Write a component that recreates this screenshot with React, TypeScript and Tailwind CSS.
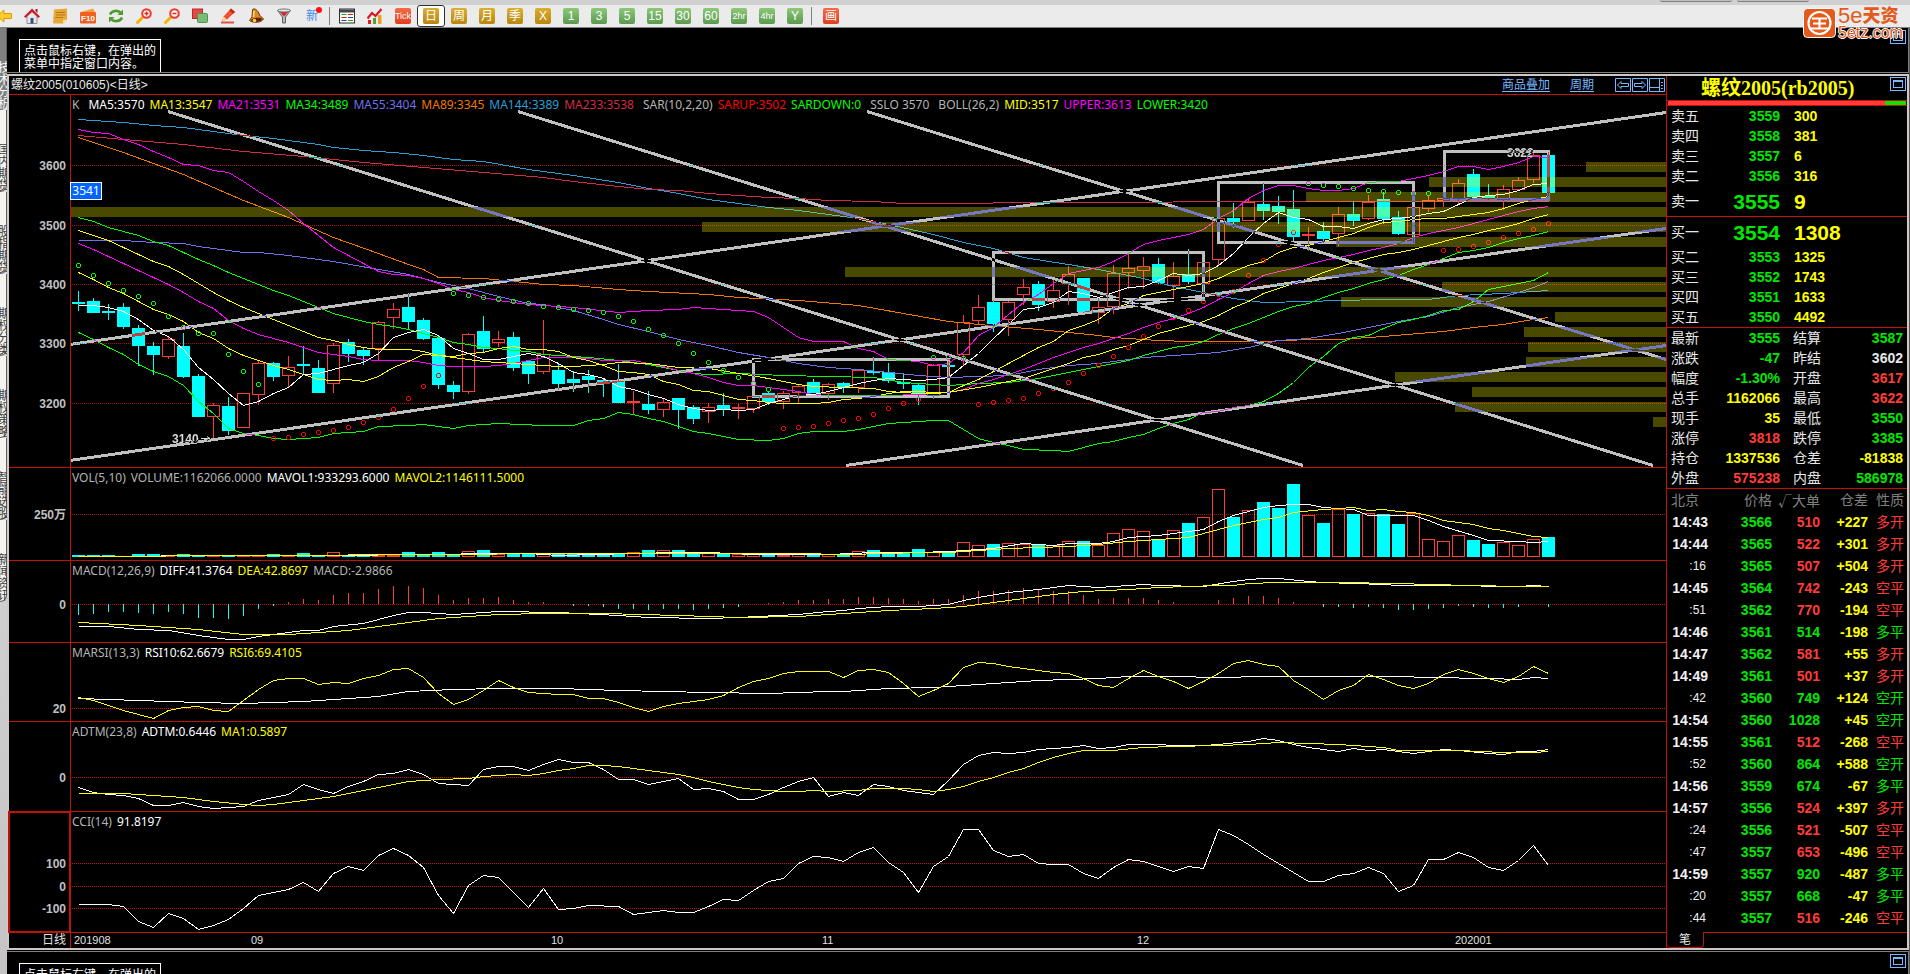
import type { ReactNode } from "react";
import clsx from "clsx";

const UP = "#ff3c38";
const DOWN = "#00ffff";
const RED = "#c01208";
const BARS = 99;

// body top, body bottom, high, low and direction of each day
const CANDLES =
  "606,612,573,633,d 602,639,594,639,d 633,639,612,660,d 621,681,609,687,d 684,738,675,797,d 738,765,726,825,d 718,772,709,776,u 738,830,699,834,d 828,951,822,951,d 915,952,909,1014,u " +
  "918,993,891,1004,d 880,983,880,983,u 790,886,782,914,u 790,830,786,843,d 802,829,768,864,u 792,797,738,822,d 804,879,780,879,d 736,853,728,879,u 726,762,717,786,d 750,768,744,795,d " +
  "667,747,663,783,u 628,655,610,687,u 621,666,580,687,d 660,717,654,720,d 714,855,708,867,d 855,876,843,897,d 703,877,699,882,u 693,747,648,758,d 718,730,693,741,u 711,804,696,813,d " +
  "783,822,779,852,d 763,817,660,822,u 810,852,789,870,d 837,849,814,876,d 828,840,810,879,d 840,853,834,891,d 843,909,792,909,d 903,907,873,945,u 912,930,873,942,d 905,929,898,951,u " +
  "894,930,894,987,d 921,957,915,972,d 922,937,909,969,u 915,928,879,948,d 922,927,912,957,u 889,926,889,939,u 879,906,873,915,d 880,907,873,927,u 859,878,853,910,u 846,880,837,880,d " +
  "853,882,849,899,u 849,862,845,880,d 811,865,811,880,u 813,819,771,825,d 817,843,789,849,d 846,851,822,868,d 855,882,850,915,d 796,889,792,896,u 795,801,783,832,d 667,766,645,797,u " +
  "622,664,585,672,u 606,672,600,696,d 607,659,603,708,u 562,584,537,615,u 552,615,543,633,d 571,607,540,624,u 523,553,498,615,u 534,636,534,640,d 622,638,595,672,u 520,622,495,641,u " +
  "505,518,460,566,u 499,513,471,567,u 491,549,474,552,d 528,558,486,594,u 522,546,447,552,d 487,553,487,590,u 355,479,352,498,u 354,366,309,384,d 306,364,295,364,u 312,333,249,360,d " +
  "318,336,288,372,d 327,411,270,422,d 402,407,381,453,u 393,417,366,430,d 343,401,321,438,u 342,363,306,378,d 306,356,286,361,u 297,357,276,372,d 351,402,333,405,d 322,406,322,430,u " +
  "301,326,288,337,u 295,302,290,321,u 250,297,237,315,u 222,291,207,291,d 288,298,252,300,d 268,300,255,330,u 241,271,231,273,u 166,241,160,248,u 165,279,156,288,d";

const candles = CANDLES.split(" ").map((c) => {
  const [top, bottom, high, low, dir] = c.split(",");
  return { top: +top, bottom: +bottom, high: +high, low: +low, up: dir === "u" };
});

const MAIN_LINES = [
  { color: "#2a9fd6", d: "0,58 3,66 5,74 7,82 9,93 11,104 13,114 16,133 17,142 19,151 21,157 23,166 25,177 27,184 30,206 31,212 33,225 36,245 38,264 40,280 42,296 44,309 46,322 48,331 50,342 52,354 54,372 57,402 59,425 61,445 63,470 66,492 68,508 69,517 71,535 73,558 75,575 77,595 79,607 82,602 84,601 87,597 90,597 92,585 95,578 98,571" },
  { color: "#d42a4a", d: "0,106 3,116 7,133 11,154 15,168 19,186 23,200 27,215 31,232 33,243 36,257 38,266 40,270 42,280 44,286 46,290 48,295 50,300 53,304 55,310 60,310 62,306 68,306 78,304 98,303" },
  { color: "#f07800", d: "0,112 1,125 3,156 5,190 7,222 9,260 11,300 14,350 17,412 20,460 22,492 23,508 24,532 27,535 31,551 33,555 36,566 38,572 42,582 44,592 48,600 52,615 55,640 58,664 60,673 64,686 68,706 69,712 72,719 74,724 79,724 82,718 84,716 87,708 91,693 93,682 95,672 97,657 98,650" },
  { color: "#7070e8", d: "0,421 3,421 5,427 7,430 8,439 10,450 11,457 12,457 14,466 17,484 20,508 22,523 24,545 26,565 28,588 30,608 31,612 33,630 35,657 36,672 38,692 40,717 42,735 44,755 46,772 48,788 50,802 52,808 54,816 56,825 58,832 60,829 62,826 64,808 66,795 68,790 71,772 74,762 76,756 78,741 80,720 82,714 84,698 86,680 88,664 90,649 92,622 94,603 96,576 97,561 98,543" },
  { color: "#00ff00", d: "0,352 1,363 2,380 3,392 4,406 5,422 6,436 7,455 8,476 9,495 10,515 11,535 12,553 13,571 14,586 15,603 16,622 17,638 18,650 19,664 20,672 21,679 22,688 23,698 24,712 25,727 26,731 27,740 28,745 29,750 30,754 31,761 32,765 34,771 36,780 38,793 40,810 41,820 42,822 44,820 47,824 50,829 53,832 55,845 56,850 58,855 60,850 62,845 64,835 66,815 68,799 69,790 70,780 71,766 72,753 73,742 74,735 75,722 76,703 77,685 78,670 79,650 80,634 81,619 82,610 83,592 84,577 85,563 86,549 87,536 88,524 89,508 90,492 91,475 92,457 93,450 94,440 95,425 96,415 97,405 98,394" },
  { color: "#ff00ff", d: "0,430 1,448 2,467 3,489 4,511 5,532 6,552 7,576 8,602 9,625 10,660 11,683 12,701 13,715 14,727 15,740 16,757 17,763 18,768 19,776 20,779 21,780 22,781 23,785 24,794 25,799 26,797 27,799 28,795 29,789 30,781 31,772 32,770 33,770 34,774 35,779 36,780 37,781 38,788 39,798 40,810 41,820 42,832 43,845 44,856 45,856 46,862 47,868 48,872 49,881 50,884 52,886 54,885 56,882 57,880 58,877 59,868 60,850 61,838 62,822 63,806 64,790 65,770 66,755 67,740 68,729 69,714 70,698 71,680 72,665 73,654 74,638 75,622 76,598 77,575 78,550 79,526 80,512 81,504 82,493 83,481 84,470 85,462 86,450 87,440 88,430 89,410 90,400 91,390 92,381 93,370 94,357 95,344 96,333 97,323 98,319" },
  { color: "#ffff00", d: "0,390 1,405 2,421 3,440 4,461 5,482 6,499 7,523 8,550 9,575 10,601 11,622 12,640 13,658 14,674 15,692 16,710 17,720 18,733 19,741 20,748 21,748 22,748 23,754 24,765 25,772 26,777 27,782 28,785 29,790 30,792 31,795 32,798 33,799 34,795 35,792 36,787 38,790 40,800 42,805 44,820 46,835 48,852 49,858 51,860 53,864 54,872 56,878 57,878 58,876 60,860 61,852 63,835 64,820 66,790 67,772 68,762 69,748 70,735 71,716 72,700 73,688 74,676 75,662 76,645 77,622 78,602 79,580 80,565 81,550 82,533 83,516 84,500 85,485 86,473 87,463 88,455 89,446 90,434 91,424 92,410 93,401 94,390 95,380 96,368 97,355 98,343" },
  { color: "#ffff00", d: "0,517 1,538 2,560 3,580 4,604 5,626 6,642 7,664 8,695 9,714 10,745 11,765 12,780 13,796 14,808 15,822 16,837 17,839 18,836 19,842 20,828 21,802 22,783 23,763 24,764 25,768 26,758 27,755 28,745 29,738 30,746 31,748 32,754 33,770 34,781 35,796 36,813 37,815 38,823 39,842 40,852 41,869 42,874 43,886 44,898 45,901 46,905 47,910 48,910 49,908 50,905 51,898 52,893 53,888 54,878 55,873 56,874 57,877 58,875 59,855 60,836 61,812 62,788 63,764 64,740 65,722 66,691 67,676 68,658 69,625 70,610 71,586 72,575 73,568 74,558 75,550 76,533 77,514 78,496 79,482 80,457 81,440 82,434 83,424 84,410 85,400 86,380 87,366 88,362 89,356 90,353 91,353 92,348 93,343 94,335 95,325 96,310 97,297 98,289" },
  { color: "#ffffff", d: "0,616 1,614 2,622 3,634 4,658 5,690 6,708 7,748 8,800 9,836 10,880 11,914 12,904 13,880 14,860 15,822 16,820 17,808 18,794 19,786 20,760 21,712 22,697 23,688 24,706 25,745 26,758 27,778 28,778 29,769 30,758 31,767 32,788 33,816 34,822 35,833 36,858 37,868 38,882 39,895 40,913 41,924 42,930 43,928 44,931 45,926 46,910 47,896 48,885 49,882 50,872 51,862 52,850 53,840 54,835 55,838 56,840 57,838 58,832 59,795 60,758 61,715 62,672 63,626 64,620 65,606 66,574 67,579 68,591 69,575 70,560 71,557 72,540 73,519 74,525 75,519 76,494 77,460 78,410 79,370 80,337 81,350 82,357 83,379 84,379 85,385 86,370 87,357 88,353 89,349 90,339 91,334 92,312 93,291 94,286 95,281 96,271 97,252 98,250" },
  { color: "#ff00ff", d: "0,86 1,95 2,100 3,118 4,132 5,152 6,170 7,193 8,196 9,211 10,217 11,244 12,274 13,300 14,330 15,370 16,405 17,442 18,465 19,488 20,514 21,523 22,524 23,535 24,550 25,567 26,577 27,590 28,600 29,607 30,611 31,614 33,620 36,637 38,631 40,628 41,622 42,623 44,629 45,634 46,652 47,680 48,710 49,724 51,724 52,743 53,754 54,776 56,782 57,794 58,790 59,755 60,706 61,680 62,643 63,606 64,583 65,550 66,520 67,510 68,500 69,482 70,459 71,433 72,421 73,410 74,402 75,387 76,355 77,330 78,295 79,271 80,256 81,256 82,265 83,269 84,271 85,264 86,247 87,244 88,244 89,233 90,226 91,214 92,198 93,199 94,206 95,199 96,186 97,168 98,170" },
  { color: "#00ff00", d: "0,697 1,717 2,742 3,761 4,791 5,812 6,829 7,854 8,903 9,938 10,985 11,998 12,1006 13,1013 14,1016 15,1013 16,1012 17,1000 18,997 19,993 20,978 22,976 23,973 24,979 25,983 26,976 28,970 31,974 33,975 34,961 35,955 36,937 37,941 38,953 39,964 40,978 41,992 42,998 43,1009 44,1018 46,1021 47,1013 48,999 49,994 51,994 52,986 53,979 54,968 56,964 57,959 58,961 59,987 60,1013 61,1025 62,1035 63,1048 65,1050 66,1054 67,1040 68,1028 69,1022 70,1010 71,1003 72,984 73,970 74,958 75,937 76,934 77,921 78,914 79,902 80,878 81,845 82,800 83,768 84,728 85,711 86,704 87,684 88,666 89,658 90,645 91,631 92,628 93,604 94,568 95,557 96,548 97,541 98,517" },
];

const SAR_DOWN =
  "0,496 1,526 2,550 3,571 4,589 5,610 6,649 7,680 8,700 9,700 10,763 11,814 12,853 25,580 26,586 27,592 28,598 29,603 30,610 31,617 32,622 33,628 34,631 35,637 36,649 37,664 38,686 39,706 40,730 41,760 42,787 43,811 44,832 45,850 46,868 57,772 58,772 59,775 82,250 83,254 84,259 85,265 86,271 87,274 88,277 89,280 90,280";
const SAR_UP =
  "13,1015 14,1012 15,1003 16,997 17,991 18,982 19,967 20,952 21,928 22,895 23,859 24,826 47,985 48,982 49,979 50,970 51,961 52,955 53,943 54,925 55,910 56,896 60,913 61,907 62,901 63,895 64,880 65,863 66,847 67,820 68,794 69,769 70,742 71,709 72,679 73,652 74,631 75,604 76,583 77,574 78,526 79,481 80,433 81,397 91,451 92,448 93,439 94,427 95,412 96,400 97,388 98,370";

// price profile: top of the band and where it starts
const PROFILE = [
  [62, 1515], [77, 1358], [92, 1235], [107, 0], [122, 631], [137, 1265], [167, 774], [182, 1371], [197, 1270],
  [212, 1484], [227, 1453], [242, 1457], [257, 1455], [272, 1324], [287, 1401], [302, 1384], [317, 1582],
];

const TRENDS = [
  [97, 11, 1232, 365], [447, 11, 1582, 365], [796, 11, 1595, 259],
  [-1, 244, 1595, 12], [-1, 360, 1595, 128], [775, 365, 1595, 245],
];
const BOXES = [
  [682, 259, 195, 37], [922, 152, 210, 47], [1147, 82, 195, 60], [1373, 51, 104, 48],
];

const VOLUMES = [
  285, 285, 285, 287, 282, 281, 286, 281, 284, 285, 285, 285, 286, 283, 285, 279, 284, 277, 284, 283, 285, 285, 276, 283, 276,
  281, 274, 270, 283, 281, 281, 283, 280, 282, 280, 280, 280, 277, 270, 271, 270, 281, 280, 279, 281, 282, 281, 284, 283, 283,
  283, 281, 274, 270, 279, 279, 267, 277, 279, 247, 256, 252, 250, 252, 252, 255, 244, 243, 254, 220, 208, 214, 238, 211, 189,
  172, 88, 171, 151, 126, 144, 72, 166, 189, 148, 162, 160, 162, 192, 160, 238, 244, 226, 240, 252, 245, 256, 238, 231,
];
const VOL_LINES = [
  { color: "#ffffff", d: "0,287 3,289 8,284 12,284 16,284 24,283 27,278 30,278 32,284 37,280 40,276 42,275 45,281 50,283 53,277 55,277 56,275 58,274 60,266 61,264 63,250 65,254 66,250 68,250 69,244 70,232 72,226 73,219 75,206 76,182 77,165 79,142 80,136 81,133 82,133 83,142 85,148 86,166 89,166 90,180 91,198 93,224 94,241 96,244 97,247 98,244" },
  { color: "#ffff00", d: "0,287 12,284 24,283 32,280 40,278 48,279 51,281 54,280 56,277 58,276 60,271 62,265 64,261 66,257 68,251 70,244 71,239 72,238 74,230 75,220 76,206 77,196 79,178 80,172 81,157 83,148 84,143 85,142 86,151 87,148 88,154 89,157 90,166 91,181 93,193 94,205 95,211 97,229 98,232" },
];

const MACD = [
  461, 458, 452, 452, 455, 458, 452, 458, 470, 470, 473, 464, 443, 434, 427, 418, 421, 406, 400, 400, 388, 378, 378, 384, 406,
  421, 415, 415, 411, 421, 427, 427, 433, 434, 434, 437, 443, 443, 446, 443, 443, 446, 443, 440, 437, 433, 430, 427, 421, 421,
  418, 418, 411, 411, 415, 418, 424, 418, 418, 406, 393, 393, 390, 384, 388, 393, 393, 406, 418, 415, 415, 415, 420, 427, 433,
  431, 421, 415, 408, 408, 415, 427, 433, 437, 437, 440, 437, 440, 446, 446, 443, 440, 435, 437, 440, 440, 437, 431, 437,
];
const MACD_LINES = [
  { color: "#ffffff", d: "0,499 2,499 4,508 6,511 8,526 10,538 11,538 12,529 14,517 15,511 16,511 17,499 19,488 21,464 22,457 23,455 24,460 25,463 26,458 28,452 32,455 36,466 38,472 42,475 44,472 48,462 50,454 51,451 52,445 54,439 56,439 58,433 59,421 60,412 62,397 64,388 66,376 68,382 71,373 72,376 75,379 77,364 78,358 79,355 80,355 82,362 83,367 87,371 88,376 93,376 94,379 96,379 97,374 98,379" },
  { color: "#ffff00", d: "0,485 4,496 8,508 11,523 14,523 16,517 18,511 21,493 22,485 24,475 28,463 31,460 35,460 40,466 44,472 48,467 51,460 54,451 57,445 59,439 61,427 63,415 65,403 67,394 70,388 72,382 76,376 77,376 78,370 80,365 84,365 88,369 90,373 96,377 98,377" },
];
const RSI_LINES = [
  { color: "#ffffff", d: "0,713 4,721 8,727 11,730 15,724 18,713 20,707 22,693 25,688 28,684 32,685 36,691 42,697 46,700 50,693 51,693 54,685 57,682 59,676 61,668 64,660 68,654 70,649 73,647 76,650 79,649 81,647 84,649 88,649 90,652 94,655 96,656 97,652 98,655" },
  { color: "#ffff00", d: "0,712 1,721 2,734 3,751 4,763 5,775 6,751 7,742 8,739 9,751 10,754 11,721 12,688 13,661 14,653 15,655 16,673 17,667 18,670 19,653 20,646 21,628 22,625 23,652 24,700 25,733 26,718 27,691 28,661 29,682 30,697 31,700 32,703 33,703 34,715 35,715 36,727 37,742 38,754 39,737 40,730 41,724 42,718 43,706 44,682 45,664 46,655 47,640 48,634 49,634 50,634 51,652 52,631 53,628 54,637 55,670 56,709 57,691 58,670 59,622 60,607 61,610 62,619 63,625 64,631 65,637 66,640 67,655 68,676 69,682 70,655 71,631 72,649 73,664 74,685 75,664 76,640 77,610 78,601 79,613 80,619 81,661 82,688 83,718 84,691 85,676 86,643 87,658 88,676 89,685 90,670 91,643 92,628 93,640 94,655 95,667 96,649 97,619 98,640" },
];
const ADTM_LINES = [
  { color: "#ffffff", d: "0,262 1,277 2,281 3,286 4,295 5,316 6,314 7,307 8,317 9,325 10,320 11,319 12,300 13,292 14,281 15,253 16,266 17,280 18,259 19,244 20,223 21,220 22,208 23,223 24,250 25,253 26,256 27,208 28,199 29,197 30,211 31,193 32,178 33,187 34,187 35,208 36,238 37,238 38,253 39,244 40,233 41,268 42,265 43,274 44,298 45,298 46,282 47,262 48,244 49,232 50,289 51,277 52,286 53,253 54,259 55,271 56,277 57,283 58,241 59,191 60,166 61,157 62,160 63,157 64,148 66,142 67,136 68,145 69,142 70,133 72,133 73,136 75,136 76,133 78,124 79,115 80,120 81,133 82,142 84,154 85,145 86,151 87,148 89,160 91,148 92,151 94,160 95,163 96,154 97,154 98,148" },
  { color: "#ffff00", d: "0,280 3,280 5,284 7,292 9,304 11,313 12,316 13,313 15,301 17,289 19,271 21,253 22,244 24,238 26,235 27,229 29,223 30,226 31,220 32,211 33,205 34,196 35,196 36,199 38,211 40,223 41,232 42,244 43,253 44,260 45,268 47,274 48,274 49,271 50,274 52,271 53,265 55,265 56,268 57,274 58,268 59,259 60,244 61,232 62,217 63,205 64,187 65,172 66,160 67,151 69,149 71,142 73,139 76,136 78,133 80,127 82,130 84,133 87,142 88,149 90,151 92,151 95,157 97,157 98,154" },
];
const CCI_LINES = [
  { color: "#ffffff", d: "0,613 2,613 3,619 4,664 5,682 6,640 7,655 8,688 9,676 10,658 11,625 12,586 13,577 14,568 15,547 16,574 17,520 18,499 19,511 20,466 21,445 22,466 23,500 24,586 25,640 26,556 27,526 28,532 29,577 30,622 31,563 32,628 33,625 34,616 36,619 37,643 38,637 39,631 40,637 41,637 42,619 43,598 44,601 45,571 46,544 47,535 48,490 49,469 50,472 51,482 52,457 53,442 54,487 55,517 56,577 57,499 58,469 59,388 60,386 61,451 62,469 63,463 64,490 65,493 66,491 67,520 68,535 69,502 70,478 71,484 72,499 73,514 74,499 75,505 76,388 77,406 78,433 79,463 80,490 81,517 82,544 83,544 84,526 85,520 86,502 87,520 88,574 89,556 90,478 91,478 92,457 93,472 94,502 95,511 96,481 97,436 98,496" },
];

const x = (i: number) => 7.5 + 15 * i;
const y = (v: number) => Math.round(v / 3);

const parse = (d: string) => d.split(" ").map((p) => p.split(",").map(Number));
const toPoints = (d: string) => parse(d).map(([i, v]) => `${x(i)},${y(v) + 0.5}`).join(" ");

type Line = { color: string; d: string };

function Lines({ lines }: { lines: Line[] }) {
  return (
    <g fill="none" shapeRendering="crispEdges">
      {lines.map((l, i) => (
        <polyline key={i} points={toPoints(l.d)} stroke={l.color} />
      ))}
    </g>
  );
}

type Tick = { at: number; label: string };
type LegendItem = { text: string; color: string; wide?: boolean };

function Pane({
  size,
  top,
  ticks,
  legend,
  selected,
  faint,
  children,
}: {
  size: string;
  top: number;
  ticks: Tick[];
  legend: LegendItem[];
  selected?: boolean;
  faint?: boolean;
  children: ReactNode;
}) {
  const height = Number(size.match(/\d+/)![0]);
  return (
    <div className={clsx("flex border-b border-[#c01208]", size)}>
      <div className={clsx("w-[61px] shrink-0", selected && "outline-2 -outline-offset-1 outline-[#c01208]")}>
        <svg
          className="block h-full w-full font-['Liberation_Sans','Noto_Sans_CJK_SC',sans-serif]"
          viewBox={`0 ${top} 61 ${height - 1}`}
        >
          {ticks.map((t) => (
            <text key={t.label} x="57" y={y(t.at) + 5} textAnchor="end" fontSize="12" fontWeight="bold" fill="#c0c0c0">
              {t.label}
            </text>
          ))}
        </svg>
      </div>
      <div className="relative min-w-0 grow border-l border-[#c01208]">
        <svg
          className="isolate block h-full w-full bg-black"
          viewBox={`0 ${top} 1595 ${height - 1}`}
          preserveAspectRatio="none"
        >
          {ticks.map((t) => (
            <line
              key={t.label}
              x1="1"
              x2="1595"
              y1={y(t.at) + 0.5}
              y2={y(t.at) + 0.5}
              stroke={faint ? "#a01008" : RED}
              strokeDasharray="1 1"
              shapeRendering="crispEdges"
            />
          ))}
          {children}
        </svg>
        <div className="absolute top-0.5 left-px flex text-xs leading-4 whitespace-nowrap">
          {legend.map((l) => (
            <span key={l.text} className={l.wide ? "mr-[9px]" : "mr-[5px]"} style={{ color: l.color }}>
              {l.text}
            </span>
          ))}
        </div>
      </div>
    </div>
  );
}

function Candles() {
  return (
    <g shapeRendering="crispEdges">
      {candles.map((c, i) => {
        const color = c.up ? UP : DOWN;
        const t = y(c.top);
        const b = Math.max(y(c.bottom), t + 2);
        return (
          <g key={i} stroke={color} fill="none">
            {c.high < c.top && <line x1={x(i)} x2={x(i)} y1={y(c.high)} y2={t} />}
            {c.low > c.bottom && <line x1={x(i)} x2={x(i)} y1={b} y2={y(c.low)} />}
            {c.up ? (
              <rect x={x(i) - 6} y={t + 0.5} width="12" height={b - t - 1} />
            ) : (
              <rect x={x(i) - 6.5} y={t} width="13" height={b - t} fill={color} stroke="none" />
            )}
          </g>
        );
      })}
    </g>
  );
}

function PriceChart() {
  return (
    <>
      <Candles />
      <Lines lines={MAIN_LINES} />
      <g fill="none" shapeRendering="crispEdges">
        {parse(SAR_DOWN).map(([i, v]) => (
          <circle key={i} cx={x(i)} cy={y(v) + 0.5} r="2" stroke="#00ff00" />
        ))}
        {parse(SAR_UP).map(([i, v]) => (
          <circle key={i} cx={x(i)} cy={y(v) + 0.5} r="2" stroke="#ff0000" />
        ))}
      </g>
      <g fill="#ffff00" fillOpacity="0.285" shapeRendering="crispEdges">
        {PROFILE.map(([top, start]) => (
          <rect key={top} x={start} y={top} width={1595 - start} height="10" />
        ))}
      </g>
      <g className="font-['Liberation_Sans',sans-serif]" fontSize="12" fontWeight="bold" fill="#d8d8d8">
        <text x="101" y="343">3140</text>
      </g>
      <path d="M130 338.5h9m-3-2 3 2-3 2" stroke="#d8d8d8" fill="none" />
      <g stroke="#c0c0c0" strokeWidth="3" fill="none" shapeRendering="crispEdges">
        {TRENDS.map(([x1, y1, x2, y2]) => (
          <line key={`${x1}-${y1}`} className="mix-blend-difference" x1={x1} y1={y1 + 0.5} x2={x2} y2={y2 + 0.5} />
        ))}
        {BOXES.map(([left, top, w, h]) => (
          <rect key={left} className="mix-blend-difference" x={left + 0.5} y={top + 0.5} width={w} height={h} />
        ))}
      </g>
      <text
        className="font-['Liberation_Sans',sans-serif] mix-blend-difference"
        x="1436"
        y="57"
        fontSize="12"
        fontWeight="bold"
        fill="#d8d8d8"
      >
        3622
      </text>
    </>
  );
}

function Volume() {
  return (
    <>
      <g shapeRendering="crispEdges">
        {VOLUMES.map((v, i) =>
          candles[i].up ? (
            <rect key={i} x={x(i) - 6} y={y(v) + 0.5} width="12" height={Math.max(96 - y(v), 1)} fill="none" stroke={UP} />
          ) : (
            <rect key={i} x={x(i) - 6.5} y={y(v)} width="13" height={97 - y(v)} fill={DOWN} />
          )
        )}
      </g>
      <Lines lines={VOL_LINES} />
    </>
  );
}

function Macd() {
  return (
    <>
      <g shapeRendering="crispEdges">
        {MACD.map((v, i) => (
          <line key={i} x1={x(i)} x2={x(i)} y1={144} y2={v > 433 ? y(v) + 1 : y(v)} stroke={v > 433 ? DOWN : UP} />
        ))}
      </g>
      <Lines lines={MACD_LINES} />
    </>
  );
}

const MONTHS = [
  { at: 3, label: "201908" },
  { at: 180, label: "09" },
  { at: 480, label: "10" },
  { at: 751, label: "11" },
  { at: 1066, label: "12" },
  { at: 1384, label: "202001" },
];

/* ---------- toolbar ---------- */

function Badge({ text, tone, small }: { text: string; tone: string; small?: boolean }) {
  return (
    <span
      className={clsx(
        "flex size-4 items-center justify-center rounded-[2px] leading-none whitespace-nowrap text-white",
        small ? "text-[9px]" : "text-xs",
        tone
      )}
    >
      {text}
    </span>
  );
}

const GOLD = "bg-linear-to-b from-[#dcae30] to-[#b8860b]";
const GREEN = "bg-linear-to-b from-[#8cc878] to-[#5a9a50]";
const FIRE = "bg-linear-to-b from-[#f86a48] to-[#e03c1c]";

function Icon({ children }: { children: ReactNode }) {
  return (
    <svg viewBox="0 0 16 16" className="size-4 shrink-0">
      {children}
    </svg>
  );
}

function Magnifier({ plus }: { plus?: boolean }) {
  return (
    <Icon>
      <path d="M1.5 14.5 6.5 9.5" stroke="#f5b400" strokeWidth="3" strokeLinecap="round" />
      <circle cx="10.5" cy="5.5" r="4.3" fill="#fff2ee" stroke="#e83c30" strokeWidth="2" />
      <path d={plus ? "M8.5 5.5h4M10.5 3.5v4" : "M8.5 5.5h4"} stroke="#e02818" strokeWidth="1.4" />
    </Icon>
  );
}

const TOOLS: { name: string; icon: ReactNode }[] = [
  { name: "后退", icon: <Icon><path d="M1 8 8 2v3.5h7.5v5H8V14z" fill="#ffc928" stroke="#e09a00" /></Icon> },
  {
    name: "主页",
    icon: (
      <Icon>
        <path d="M3 8v7.5h10V8L8 3.5z" fill="#e8e8ec" stroke="#8c8c98" />
        <path d="M0 8.5 8 .5l8 8L14.500 10 8 4 1.500 10z" fill="#c8202c" />
        <path d="M11.5 1h2v4l-2-2z" fill="#a01820" />
        <path d="M6.5 10h3v5.5h-3z" fill="#385078" />
      </Icon>
    ),
  },
  {
    name: "资讯",
    icon: (
      <Icon>
        <path d="M2 1.5 15 .5v11l-3.500 4H1z" fill="#e8a838" />
        <path d="M4 4.500h9M4 7h9M3.500 9.500H11" stroke="#b87818" />
        <path d="M11 15.500v-3.500l4-.500z" fill="#fbe0a0" />
      </Icon>
    ),
  },
  {
    name: "F10",
    icon: (
      <Icon>
        <path d="M1 4 13 .5 15 4v11H1z" fill="#f8a040" />
        <rect x="0" y="4" width="16" height="11.5" rx="1" fill="#f06020" />
        <text x="8" y="13" textAnchor="middle" fontSize="8" fontWeight="bold" fill="#fff">F10</text>
      </Icon>
    ),
  },
  {
    name: "刷新",
    icon: (
      <Icon>
        <path d="M2 6.5C3.500 2.500 10 1.500 13 5M14 9.500c-1.500 4-8 5-11 1.500" stroke="#4f9a2c" strokeWidth="2.6" fill="none" />
        <path d="M15 1.500V7H9.500zM1 14.500V9h5.500z" fill="#4f9a2c" />
      </Icon>
    ),
  },
  { name: "放大", icon: <Magnifier plus /> },
  { name: "缩小", icon: <Magnifier /> },
  {
    name: "叠加",
    icon: (
      <Icon>
        <rect x=".5" y="1" width="10" height="9.5" fill="#e84848" stroke="#b82828" />
        <rect x="5.5" y="5.5" width="10" height="9" rx="1" fill="#78bc78" stroke="#4c9450" />
      </Icon>
    ),
  },
  {
    name: "画线",
    icon: (
      <Icon>
        <path d="M2 13 3.500 8.500 11 .5 15 4 7 11.500z" fill="#f05030" />
        <path d="M11 .5 15 4 13 5.800 9.300 2.300z" fill="#c02818" />
        <path d="M2 13 3.500 8.500 7 11.500z" fill="#f8d8a0" />
        <path d="M1 14.500h13" stroke="#e05040" strokeWidth="2" />
      </Icon>
    ),
  },
  {
    name: "预警",
    icon: (
      <Icon>
        <path d="M4.500 1.500C5.500 0 8 1 10 3.500l2 4 3.500 3.500c-1.500 3-9 5-14 1.500L4 9z" fill="#d88820" stroke="#703808" />
        <path d="M6 3 5.500 9" stroke="#ffe080" strokeWidth="1.500" />
        <ellipse cx="8.500" cy="11.800" rx="5.500" ry="2" transform="rotate(-8 8.500 11.800)" fill="#602008" />
        <circle cx="6.500" cy="12.500" r="1.800" fill="#ffd040" />
      </Icon>
    ),
  },
  {
    name: "选股",
    icon: (
      <Icon>
        <path d="M1.500 2.500 6.500 9v6h3V9l5-6.500z" fill="#b8b8b8" stroke="#606060" />
        <path d="M3.500 3.500h9L8 8.500z" fill="#e02030" />
        <ellipse cx="8" cy="2.500" rx="6.500" ry="1.500" fill="#e8e8e8" stroke="#707070" />
      </Icon>
    ),
  },
  {
    name: "新功能",
    icon: (
      <span className="relative text-xs leading-4 text-[#3c8ce8]">
        新
        <span className="absolute -top-px -right-1 size-[6px] rounded-full bg-[#ff1010]" />
      </span>
    ),
  },
];

const VIEWS: { name: string; icon: ReactNode; active?: boolean }[] = [
  {
    name: "报价表",
    icon: (
      <Icon>
        <rect x=".5" y="1" width="15" height="14" fill="#fffff0" stroke="#303030" />
        <path d="M1 3h14" stroke="#404858" strokeWidth="3" />
        <path d="M2.5 6.5h5" stroke="#20a040" />
        <path d="M9 6.5h5M2.5 9.5h5" stroke="#d02020" />
        <path d="M9 9.5h5M2.5 12.5h5" stroke="#2040c0" />
        <path d="M9 12.5h5" stroke="#20a040" />
      </Icon>
    ),
  },
  {
    name: "分时图",
    icon: (
      <Icon>
        <path d="M1 12h3v4H1z" fill="#e02020" />
        <path d="M6 10h3v6H6z" fill="#50a030" />
        <path d="M11 7h3.500v9H11z" fill="#e8a020" />
        <path d="M.5 10.500 5 5l3.500 3L14.500 1" stroke="#d81820" strokeWidth="2.2" fill="none" />
      </Icon>
    ),
  },
  { name: "Tick", icon: <Badge text="Tick" tone={FIRE} small /> },
  { name: "日线", icon: <Badge text="日" tone={GOLD} />, active: true },
  { name: "周线", icon: <Badge text="周" tone={GOLD} /> },
  { name: "月线", icon: <Badge text="月" tone={GOLD} /> },
  { name: "季线", icon: <Badge text="季" tone={GOLD} /> },
  { name: "X日", icon: <Badge text="X" tone={GOLD} /> },
  { name: "1分钟", icon: <Badge text="1" tone={GREEN} /> },
  { name: "3分钟", icon: <Badge text="3" tone={GREEN} /> },
  { name: "5分钟", icon: <Badge text="5" tone={GREEN} /> },
  { name: "15分钟", icon: <Badge text="15" tone={GREEN} /> },
  { name: "30分钟", icon: <Badge text="30" tone={GREEN} /> },
  { name: "60分钟", icon: <Badge text="60" tone={GREEN} /> },
  { name: "2小时", icon: <Badge text="2hr" tone={GREEN} small /> },
  { name: "4小时", icon: <Badge text="4hr" tone={GREEN} small /> },
  { name: "年线", icon: <Badge text="Y" tone={GREEN} /> },
];

function ToolButton({ name, active, children }: { name: string; active?: boolean; children: ReactNode }) {
  return (
    <button
      type="button"
      aria-label={name}
      className={clsx(
        "flex h-[22px] w-7 shrink-0 items-center justify-center",
        active && "rounded-[3px] border border-[#303030] bg-white"
      )}
    >
      {children}
    </button>
  );
}

function Toolbar() {
  return (
    <header className="relative h-7 shrink-0 border-b border-[#808080] bg-[#ebebeb]">
      <div className="flex h-[5px] justify-end gap-[5px] bg-[#d0d0d0] pr-[101px]">
        <span className="h-0.5 w-[72px] rounded-b-sm border-b border-[#808080] bg-[#c0c0c0]" />
        <span className="h-0.5 w-[72px] rounded-b-sm border-b border-[#808080] bg-[#c0c0c0]" />
      </div>
      <div className="-ml-[10px] flex items-center">
        {TOOLS.map((t) => (
          <ToolButton key={t.name} name={t.name}>{t.icon}</ToolButton>
        ))}
        <span className="mx-[3px] h-[18px] w-px bg-[#808080]" />
        {VIEWS.map((t) => (
          <ToolButton key={t.name} name={t.name} active={t.active}>{t.icon}</ToolButton>
        ))}
        <span className="mr-[5px] ml-0.5 h-[18px] w-px bg-[#808080]" />
        <ToolButton name="画图"><Badge text="画" tone={FIRE} /></ToolButton>
      </div>
      <Logo />
    </header>
  );
}

function Logo() {
  return (
    <div className="absolute top-[6px] right-1 z-10 flex items-start gap-0.5">
      <svg viewBox="0 0 33 30" className="mt-0.5 h-[30px] w-[33px]">
        <rect x=".5" y=".5" width="32" height="29" rx="4" fill="#e45a1c" stroke="#fff" />
        <circle cx="16.5" cy="15" r="11" fill="none" stroke="#fff" strokeWidth="2.2" />
        <path d="M9 10.500h15M10 15.500h13M6 20.500h21M16.500 10.500v10" stroke="#fff" strokeWidth="2.2" />
      </svg>
      <div className="w-[68px] text-[#e45a1c]">
        <div className="flex h-5 items-center whitespace-nowrap">
          <span className="text-[22px] leading-5">5e</span>
          <span className="text-lg leading-5 font-black">天资</span>
        </div>
        <div className="text-base leading-[14px] [text-shadow:1px_0_#fff,-1px_0_#fff,0_1px_#fff,0_-1px_#fff]">
          5etz.com
        </div>
      </div>
    </div>
  );
}

/* ---------- frames ---------- */

function WindowIcon() {
  return (
    <button type="button" aria-label="最大化" className="flex h-[14px] w-4 items-center justify-center border border-[#78b8ff]">
      <span className="h-2 w-[10px] border border-t-2 border-[#78b8ff]" />
    </button>
  );
}

function EmptyWindow() {
  return (
    <div className="flex h-full justify-between overflow-hidden border-r border-[#808080] bg-black pr-0.5 pl-3">
      <p className="mt-[11px] h-[60px] w-[142px] shrink-0 border border-white px-1 pt-[5px] text-xs leading-[13px] text-white">
        点击鼠标右键，在弹出的
        <br />
        菜单中指定窗口内容。
      </p>
      <div className="pt-0.5">
        <WindowIcon />
      </div>
    </div>
  );
}

const TABS = ["技术分析", "国内期货", "股指期货", "期权分类", "期权策略", "智能选股", "新闻资讯"];

function Sidebar() {
  return (
    <nav className="flex w-[7px] shrink-0 flex-col overflow-hidden bg-linear-to-b from-[#e0e0e0] to-[#c4c4c4]">
      {TABS.map((t, i) => (
        <button
          key={t}
          type="button"
          className={clsx(
            "flex h-[82px] w-full items-center justify-end rounded-br-lg border-r border-b border-[#606060] pr-px text-xs leading-3 [writing-mode:vertical-rl]",
            i === 0 ? "bg-[#808080] text-white" : "bg-[#f4f3ee] text-[#404040]"
          )}
        >
          <span className="w-3 shrink-0">{t}</span>
        </button>
      ))}
    </nav>
  );
}

function TitleBar() {
  const frame = { fill: "none", stroke: "#78b8ff" };
  return (
    <div className="flex h-[19px] items-center justify-between border-b border-[#c01208] text-xs leading-none">
      <h1 className="pl-0.5 text-[#e8e8e8]">螺纹2005(010605)&lt;日线&gt;</h1>
      <div className="flex items-center pr-px text-[#78b8ff]">
        <a href="#overlay" className="mr-5 underline underline-offset-2">商品叠加</a>
        <a href="#period" className="mr-[21px] underline underline-offset-2">周期</a>
        <div className="flex gap-px">
          <button type="button" aria-label="向左">
            <svg className="block h-[14px] w-4" viewBox="0 0 16 14" {...frame}>
              <path d="M.5.5h15v13H.5zM2.500 7 6 3.500V5.500h7.500v3H6v2z" />
            </svg>
          </button>
          <button type="button" aria-label="向右">
            <svg className="block h-[14px] w-4" viewBox="0 0 16 14" {...frame}>
              <path d="M.5.5h15v13H.5zM13.500 7 10 3.500V5.500H2.500v3H10v2z" />
            </svg>
          </button>
          <button type="button" aria-label="侧栏">
            <svg className="block h-[14px] w-4" viewBox="0 0 16 14" {...frame}>
              <path d="M.5.5h15v13H.5zM10.500.5v13M.5 9.500h10M12 4.500h2M12 7.500h2M12 10.500h2" />
            </svg>
          </button>
        </div>
      </div>
    </div>
  );
}

/* ---------- quote panel ---------- */

const TXT: Record<string, string> = {
  g: "text-[#00e800]",
  r: "text-[#ff3c38]",
  y: "text-[#ffff00]",
  w: "text-[#e8e8e8]",
};

const ASKS = [["卖五", "3559", "300"], ["卖四", "3558", "381"], ["卖三", "3557", "6"], ["卖二", "3556", "316"], ["卖一", "3555", "9"]];
const BIDS = [["买一", "3554", "1308"], ["买二", "3553", "1325"], ["买三", "3552", "1743"], ["买四", "3551", "1633"], ["买五", "3550", "4492"]];

const STATS = [
  ["最新", "3555", "g", "结算", "3587", "g"],
  ["涨跌", "-47", "g", "昨结", "3602", "w"],
  ["幅度", "-1.30%", "g", "开盘", "3617", "r"],
  ["总手", "1162066", "y", "最高", "3622", "r"],
  ["现手", "35", "y", "最低", "3550", "g"],
  ["涨停", "3818", "r", "跌停", "3385", "g"],
  ["持仓", "1337536", "y", "仓差", "-81838", "y"],
  ["外盘", "575238", "r", "内盘", "586978", "g"],
];

const DEALS = [
  ["14:43", "3566", "510", "r", "+227", "多开", "r"],
  ["14:44", "3565", "522", "r", "+301", "多开", "r"],
  [":16", "3565", "507", "r", "+504", "多开", "r"],
  ["14:45", "3564", "742", "r", "-243", "空平", "r"],
  [":51", "3562", "770", "r", "-194", "空平", "r"],
  ["14:46", "3561", "514", "g", "-198", "多平", "g"],
  ["14:47", "3562", "581", "r", "+55", "多开", "r"],
  ["14:49", "3561", "501", "r", "+37", "多开", "r"],
  [":42", "3560", "749", "g", "+124", "空开", "g"],
  ["14:54", "3560", "1028", "g", "+45", "空开", "g"],
  ["14:55", "3561", "512", "r", "-268", "空平", "r"],
  [":52", "3560", "864", "g", "+588", "空开", "g"],
  ["14:56", "3559", "674", "g", "-67", "多平", "g"],
  ["14:57", "3556", "524", "r", "+397", "多开", "r"],
  [":24", "3556", "521", "r", "-507", "空平", "r"],
  [":47", "3557", "653", "r", "-496", "空平", "r"],
  ["14:59", "3557", "920", "g", "-487", "多平", "g"],
  [":20", "3557", "668", "g", "-47", "多平", "g"],
  [":44", "3557", "516", "r", "-246", "空平", "r"],
];

function Depth({ rows }: { rows: string[][] }) {
  return (
    <table className="w-full table-fixed border-separate border-spacing-0 border-b border-[#c01208] text-sm leading-none">
      <colgroup>
        <col className="w-[36px]" />
        <col className="w-[77px]" />
        <col />
      </colgroup>
      <tbody>
        {rows.map(([label, price, amount]) => {
          const best = label.endsWith("一");
          return (
            <tr key={label} className={best ? "h-[30px]" : "h-5"}>
              <th scope="row" className="pl-1 text-left font-normal text-[#e8e8e8]">{label}</th>
              <td className={clsx("text-right font-bold", TXT.g, best && "text-[21px] leading-none")}>{price}</td>
              <td className={clsx("pl-[14px] font-bold", TXT.y, best && "text-[21px] leading-none")}>{amount}</td>
            </tr>
          );
        })}
      </tbody>
    </table>
  );
}

function QuotePanel() {
  return (
    <aside className="flex w-[241px] shrink-0 flex-col border-l border-[#c01208] text-sm leading-none">
      <div className="flex h-6 justify-between pr-px">
        <h2 className="pl-[34px] font-['Liberation_Serif','Noto_Sans_CJK_SC',serif] text-xl leading-6 font-bold text-[#ffff00]">
          螺纹2005(rb2005)
        </h2>
        <div className="pt-px">
          <WindowIcon />
        </div>
      </div>
      <div className="flex h-[6px] border-y border-[#c01208] px-px">
        <span className="grow bg-[#ff3c38]" />
        <span className="w-[21px] bg-[#00e800]" />
      </div>
      <Depth rows={ASKS} />
      <Depth rows={BIDS} />
      <table className="w-full table-fixed border-separate border-spacing-0 border-b border-[#c01208]">
        <colgroup>
          <col className="w-[36px]" />
          <col className="w-[77px]" />
          <col className="w-[46px]" />
          <col />
        </colgroup>
        <tbody>
          {STATS.map(([a, av, ac, b, bv, bc]) => (
            <tr key={a} className="h-5">
              <th scope="row" className="pl-1 text-left font-normal text-[#e8e8e8]">{a}</th>
              <td className={clsx("text-right font-bold", TXT[ac])}>{av}</td>
              <th scope="row" className="pl-[13px] text-left font-normal text-[#e8e8e8]">{b}</th>
              <td className={clsx("pr-1 text-right font-bold", TXT[bc])}>{bv}</td>
            </tr>
          ))}
        </tbody>
      </table>
      <table className="mb-[3px] w-full table-fixed border-separate border-spacing-0">
        <colgroup>
          <col className="w-[44px]" />
          <col className="w-[61px]" />
          <col className="w-[48px]" />
          <col className="w-[48px]" />
          <col />
        </colgroup>
        <thead>
          <tr className="h-[22px] text-right text-[#808080] [&>th]:font-normal">
            <th className="pl-1 text-left">北京</th>
            <th>价格</th>
            <th className="font-['Noto_Sans_CJK_SC',sans-serif] whitespace-nowrap">√大单</th>
            <th>仓差</th>
            <th className="pr-[3px]">性质</th>
          </tr>
        </thead>
        <tbody>
          {DEALS.map(([time, price, amount, ac, diff, kind, kc], i) => (
            <tr key={i} className="h-[22px] text-right font-bold">
              <td className={clsx("text-[#f0f0f0]", time.startsWith(":") ? "pr-[5px] text-xs leading-none font-normal" : "pr-[3px]")}>
                {time}
              </td>
              <td className={TXT.g}>{price}</td>
              <td className={TXT[ac]}>{amount}</td>
              <td className={TXT.y}>{diff}</td>
              <td className={clsx("pr-[3px] font-normal", TXT[kc])}>{kind}</td>
            </tr>
          ))}
        </tbody>
      </table>
      <div className="flex h-4">
        <button type="button" className="w-[37px] rounded-b-sm border-r border-b border-[#c01208] text-xs leading-none text-[#e8e8e8]">
          笔
        </button>
        <span className="grow border-t border-[#c01208]" />
      </div>
    </aside>
  );
}

const GRAY = "#b4b4b4";
const WHITE = "#ffffff";
const YELLOW = "#ffff00";

export default function App() {
  return (
    <div className="flex h-screen flex-col overflow-hidden bg-black font-['Liberation_Sans','Noto_Sans_CJK_SC',sans-serif]">
      <Toolbar />
      <div className="flex min-h-0 grow">
        <Sidebar />
        <div className="flex min-w-0 grow flex-col border-r border-[#505050]">
          <div className="h-[45px] shrink-0 border-b border-[#808080]">
            <EmptyWindow />
          </div>
          <main className="mt-px flex shrink-0 border-2 border-[#d0c8c8]">
            <div className="min-w-0 grow">
              <TitleBar />
              <div className="font-['Noto_Sans','Noto_Sans_CJK_SC',sans-serif]">
                <div className="relative">
                  <Pane
                    size="h-[373px]"
                    top={-5}
                    faint
                    ticks={[
                      { at: 196, label: "3600" },
                      { at: 374, label: "3500" },
                      { at: 553, label: "3400" },
                      { at: 730, label: "3300" },
                      { at: 908, label: "3200" },
                    ]}
                    legend={[
                      { text: "K", color: GRAY, wide: true },
                      { text: "MA5:3570", color: WHITE },
                      { text: "MA13:3547", color: YELLOW },
                      { text: "MA21:3531", color: "#ff00ff" },
                      { text: "MA34:3489", color: "#00ff00" },
                      { text: "MA55:3404", color: "#7070e8" },
                      { text: "MA89:3345", color: "#f07800" },
                      { text: "MA144:3389", color: "#2a9fd6" },
                      { text: "MA233:3538", color: "#d42a4a", wide: true },
                      { text: "SAR(10,2,20)", color: GRAY },
                      { text: "SARUP:3502", color: "#ff0000" },
                      { text: "SARDOWN:0", color: "#00ff00", wide: true },
                      { text: "SSLO 3570", color: GRAY, wide: true },
                      { text: "BOLL(26,2)", color: GRAY },
                      { text: "MID:3517", color: YELLOW },
                      { text: "UPPER:3613", color: "#ff00ff" },
                      { text: "LOWER:3420", color: "#00ff00" },
                    ]}
                  >
                    <PriceChart />
                  </Pane>
                  <span className="absolute top-[87px] left-[61px] h-[18px] w-8 border border-white bg-[#0064ff] text-center text-xs leading-4 text-white">
                    3541
                  </span>
                </div>
                <Pane
                  size="h-[93px]"
                  top={8}
                  faint
                  ticks={[{ at: 163, label: "250万" }]}
                  legend={[
                    { text: "VOL(5,10)", color: GRAY },
                    { text: "VOLUME:1162066.0000", color: GRAY },
                    { text: "MAVOL1:933293.6000", color: WHITE },
                    { text: "MAVOL2:1146111.5000", color: YELLOW },
                  ]}
                >
                  <Volume />
                </Pane>
                <Pane
                  size="h-[82px]"
                  top={101}
                  ticks={[{ at: 433, label: "0" }]}
                  legend={[
                    { text: "MACD(12,26,9)", color: GRAY },
                    { text: "DIFF:41.3764", color: WHITE },
                    { text: "DEA:42.8697", color: YELLOW },
                    { text: "MACD:-2.9866", color: GRAY },
                  ]}
                >
                  <Macd />
                </Pane>
                <Pane
                  size="h-[79px]"
                  top={183}
                  ticks={[{ at: 745, label: "20" }]}
                  legend={[
                    { text: "MARSI(13,3)", color: GRAY },
                    { text: "RSI10:62.6679", color: WHITE },
                    { text: "RSI6:69.4105", color: YELLOW },
                  ]}
                >
                  <Lines lines={RSI_LINES} />
                </Pane>
                <Pane
                  size="h-[90px]"
                  top={22}
                  ticks={[{ at: 232, label: "0" }]}
                  legend={[
                    { text: "ADTM(23,8)", color: GRAY },
                    { text: "ADTM:0.6446", color: WHITE },
                    { text: "MA1:0.5897", color: YELLOW },
                  ]}
                >
                  <Lines lines={ADTM_LINES} />
                </Pane>
                <Pane
                  size="h-[121px]"
                  top={112}
                  selected
                  ticks={[
                    { at: 490, label: "100" },
                    { at: 559, label: "0" },
                    { at: 625, label: "-100" },
                  ]}
                  legend={[
                    { text: "CCI(14)", color: GRAY },
                    { text: "91.8197", color: WHITE },
                  ]}
                >
                  <Lines lines={CCI_LINES} />
                </Pane>
              </div>
              <div className="flex h-[15px] text-xs leading-[15px] text-[#e0e0e0]">
                <span className="w-[61px] shrink-0 pr-1 text-right">日线</span>
                <div className="min-w-0 grow border-l border-[#c01208]">
                  <svg className="block h-full w-full" viewBox={`0 0 ${15 * BARS + 110} 15`} preserveAspectRatio="none">
                    {MONTHS.map((m) => (
                      <text key={m.label} x={m.at} y="11" fontSize="11" fill="#e0e0e0">
                        {m.label}
                      </text>
                    ))}
                  </svg>
                </div>
              </div>
            </div>
            <QuotePanel />
          </main>
          <div className="mt-px min-h-0 grow border-t border-[#808080]">
            <EmptyWindow />
          </div>
        </div>
      </div>
    </div>
  );
}
